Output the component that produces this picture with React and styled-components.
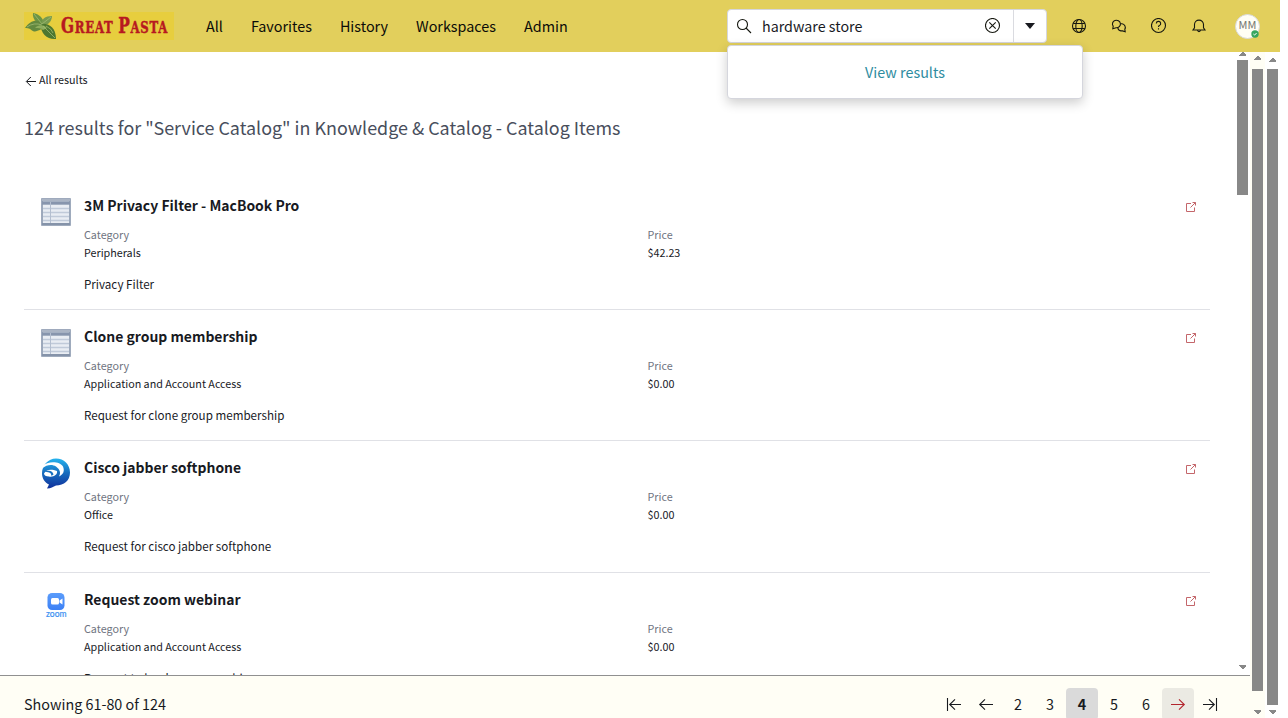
import React from "react";
import styled, { createGlobalStyle, css } from "styled-components";

const Global = createGlobalStyle`
  * { box-sizing: border-box; }
  body { margin: 0; background: #fff; overflow: hidden; }
  body, button, input { font-family: "Noto Sans CJK SC", "Noto Sans", sans-serif; color: #181a1f; }
  button { border: 0; background: none; padding: 0; }
  svg { display: block; flex: none; }
`;

const Page = styled.div`
  width: 1288px;
  height: 718px;
  padding-right: 8px;
  display: flex;
  flex-direction: column;
  overflow: hidden;
  background: #fff;
`;

const Header = styled.header`
  height: 52px;
  flex: none;
  display: flex;
  align-items: center;
  padding: 0 20px 0 24px;
  background: #e2cf5c;
`;

const Nav = styled.nav`
  display: flex;
  flex: 1;
  gap: 28px;
  margin-left: 32px;
`;

const NavItem = styled.a`
  font-size: 14.37px;
  line-height: 24px;
  color: #0b0b08;
  white-space: nowrap;
`;

const SearchWrap = styled.div`
  position: relative;
  width: 320px;
  height: 34px;
`;

const SearchBox = styled.div`
  display: flex;
  align-items: center;
  width: 100%;
  height: 100%;
  padding-left: 8px;
  background: #fff;
  border: 1px solid #d5d6dd;
  border-radius: 4px;
`;

const Query = styled.span`
  flex: 1;
  margin-left: 10px;
  font-size: 14.3px;
  line-height: 24px;
`;

const ScopeButton = styled.button`
  display: flex;
  align-items: center;
  justify-content: center;
  width: 33px;
  height: 32px;
  margin-left: 12px;
  border-left: 1px solid #dadbe0;
`;

const Suggestions = styled.div`
  position: absolute;
  z-index: 2;
  top: 36px;
  left: 0;
  width: 356px;
  height: 54px;
  display: flex;
  align-items: center;
  justify-content: center;
  background: #fff;
  border: 1px solid #d5d6dd;
  border-radius: 4px;
  box-shadow: 0 4px 12px rgba(0, 0, 0, 0.2);
  color: #2e8ca0;
  font-size: 14.37px;
  line-height: 24px;
`;

const Tools = styled.div`
  display: flex;
  align-items: center;
  gap: 24px;
  margin-left: 24px;
`;

const Avatar = styled.div`
  position: relative;
  display: flex;
  align-items: center;
  justify-content: center;
  width: 25px;
  height: 25px;
  margin-left: 28px;
  border: 1px solid #d9d9d9;
  border-radius: 50%;
  background: #fffef5;
  color: #74766f;
  font-size: 11px;
  line-height: 16px;
  padding-bottom: 4px;
`;

const Presence = styled.svg`
  position: absolute;
  right: 0;
  bottom: 0;
`;

const Body = styled.div`
  flex: 1;
  min-height: 0;
  display: flex;
`;

const Main = styled.main`
  width: 1250px;
  display: flex;
  flex-direction: column;
`;

const ScrollRegion = styled.div`
  height: 623px;
  flex: none;
  display: flex;
  overflow: hidden;
`;

const Results = styled.div`
  flex: 1;
  padding: 17px 25px 0 24px;
  overflow: hidden;
`;

const BackLink = styled.a`
  display: flex;
  align-items: center;
  gap: 2px;
  height: 20px;
  font-size: 10.75px;

  svg { margin-top: 2px; }
`;

const Heading = styled.h1`
  margin: 23px 0 37px;
  height: 30px;
  font-size: 17.92px;
  line-height: 30px;
  font-weight: 400;
  color: #484e5c;
`;

const Row = styled.article`
  display: flex;
  height: ${(p) => p.$h}px;
  padding: 13px 13px 0 16px;
  border-bottom: 1px solid #e0e1e6;
`;

const Thumb = styled.div`
  width: 32px;
  height: 32px;
  margin-top: 4px;
  margin-right: 12px;
`;

const Details = styled.div`
  flex: 1;
`;

const Title = styled.h2`
  margin: 0;
  height: 26px;
  font-size: 13.95px;
  line-height: 26px;
  font-weight: 700;
`;

const Fields = styled.dl`
  display: grid;
  grid-template-columns: 563.5px 1fr;
  grid-template-rows: 18px 18px;
  grid-auto-flow: column;
  margin: 8px 0 0;
  font-size: 10.75px;
  line-height: 18px;
`;

const Label = styled.dt`
  color: #6f7481;
`;

const Value = styled.dd`
  margin: 0;
`;

const Summary = styled.p`
  margin: 12px 0 0;
  font-size: 11.62px;
  line-height: 20px;
`;

const OpenIcon = styled.svg`
  margin-top: 9px;
`;

const Footer = styled.footer`
  flex: 1;
  display: flex;
  align-items: flex-start;
  justify-content: space-between;
  padding: 12px 24px 0;
  border-top: 1px solid #909090;
  background: #fffef5;
`;

const Count = styled.span`
  font-size: 14.37px;
  line-height: 32px;
`;

const Pager = styled.div`
  display: flex;
`;

const PageButton = styled.button`
  width: 32px;
  height: 32px;
  display: flex;
  align-items: center;
  justify-content: center;
  border-radius: 4px;
  font-size: 14.37px;
  line-height: 32px;
  ${(p) => p.$current && css`background: #dadada; font-weight: 700;`}
  ${(p) => p.$hover && css`background: #ebeae3;`}
`;

const Track = styled.div`
  width: 15px;
  flex: none;
  display: flex;
  flex-direction: column;
  align-items: center;
  overflow: hidden;
  padding: ${(p) => p.$pad};
  background: ${(p) => p.$bg || "#fff"};
`;

const ScrollThumb = styled.div`
  width: 11px;
  height: ${(p) => p.$h}px;
  margin: ${(p) => p.$gap};
  flex: none;
  background: #888;
`;

function ScrollArrow({ down }) {
  return (
    <svg width="7" height="4" shapeRendering="crispEdges">
      <path d={down ? "M0 0H7V1L4 4H3L0 1Z" : "M0 4V3L3 0H4L7 3V4Z"} fill="#888" />
    </svg>
  );
}

const line = { fill: "none", stroke: "#15170f", strokeWidth: 1.1 };

const LogoFrame = styled.div`
  width: 150px;
  height: 28px;
  flex: none;
  background: #e7ce3e;
`;

function Logo() {
  return (
    <LogoFrame>
      <svg width="150" height="28">
        <path d="M20 13C13 12 8 7 9 1C15 2 20 6 20 13Z" fill="#6b9445" />
        <path d="M19 13C15 6 6 8 1 16C7 15 8 21 13 19C16 18 19 17 19 13Z" fill="#63893f" />
        <path d="M18 13C17 7 21 4 28 4C28 9 24 14 18 13Z" fill="#789b50" />
        <path d="M17 12C24 11 32 15 32 27C24 28 16 22 17 12Z" fill="#4c7730" />
        <path d="M11 16C14 13 19 12 23 16L19 18C17 16 14 16 11 16Z" fill="#8fae5e" />
        <path d="M3 15Q10 10 18 13M10 2L18 12L27 5M19 14L31 26M22 14Q28 17 29 21" fill="none" stroke="#9fba72" strokeWidth=".8" />
        <text
          x="37"
          y="21.3"
          fill="#b71920"
          stroke="#b71920"
          strokeWidth=".5"
          fontFamily="'DejaVu Serif Condensed', 'DejaVu Serif', serif"
          fontWeight="700"
          fontSize="23"
          letterSpacing="1"
          textLength="107"
          lengthAdjust="spacingAndGlyphs"
        >
          G<tspan fontSize="17.5">REAT </tspan>P<tspan fontSize="17.5">ASTA</tspan>
        </text>
      </svg>
    </LogoFrame>
  );
}

function TableIcon() {
  return (
    <svg width="32" height="32">
      <rect x="2" y="3" width="28" height="26" fill="#e9edf3" stroke="#8896ad" strokeWidth="1.6" />
      <path d="M2 4H30" stroke="#aab4c4" strokeWidth="2" />
      <path d="M2 7H30" stroke="#8795ad" strokeWidth="3.4" />
      <path d="M3 12.5H29M3 16.5H29M3 20.5H29M3 24.5H29" stroke="#c0cad9" strokeWidth="1.3" />
      <path d="M10.5 6V28" stroke="#b4bfd0" />
      <path d="M2 28H30" stroke="#8593a9" strokeWidth="2" />
    </svg>
  );
}

function JabberIcon() {
  return (
    <svg width="32" height="32">
      <defs>
        <linearGradient id="jabber" x1="0" y1="0" x2="0" y2="1">
          <stop offset="0" stopColor="#25b3ee" />
          <stop offset=".45" stopColor="#1870c0" />
          <stop offset="1" stopColor="#10309b" />
        </linearGradient>
      </defs>
      <g transform="translate(0 -.5)">
        <path d="M16 1C24 1 30 7 30 15C30 23 24 28 16 28C13 29 11 31 7 31L9 27C5 25 2 21 2 16C2 8 8 1 16 1Z" fill="url(#jabber)" />
        <path d="M2 9C8 3 20 4 23 9C25 14 23 17 19 19C21 15 20 12 16 9C12 6.5 7 7 2 11Z" fill="#fff" />
        <path d="M4 16C6 12 11 11 17 13.5C18 17 13 20 9 19C6 19 4 18 4 16Z" fill="#fff" />
        <path d="M4.5 14.5C9 12 13 14 13.5 17C13 17.8 12 18 11 18C12 15.5 9 14.3 4.5 14.5Z" fill="#1870c0" />
      </g>
    </svg>
  );
}

function ZoomIcon() {
  return (
    <svg width="32" height="32">
      <defs>
        <linearGradient id="zoom" x1="0" y1="0" x2="0" y2="1">
          <stop offset="0" stopColor="#5a9cfb" />
          <stop offset="1" stopColor="#3c80f5" />
        </linearGradient>
      </defs>
      <rect x="7.5" y="3" width="17" height="17" rx="4.5" fill="url(#zoom)" />
      <rect x="11" y="8" width="8" height="6.5" rx="1.5" fill="#fff" />
      <path d="M19.5 10.5L22.5 8.5V14.5L19.5 12.5Z" fill="#fff" />
      <text x="6" y="26.6" fontSize="9" fontFamily="Lato, sans-serif" fill="#3d91f2" stroke="#3d91f2" strokeWidth=".2" textLength="20.5" lengthAdjust="spacingAndGlyphs">zoom</text>
    </svg>
  );
}

function Arrow({ right, bar, color = "#181a1f" }) {
  return (
    <svg width="16" height="16" fill="none" stroke={color} strokeWidth="1.1">
      <g transform={right ? "matrix(-1 0 0 1 16 0)" : undefined}>
        {bar && <path d="M1.5 2V15" />}
        <path d={bar ? "M15 8.5H4M9 3.3L3.7 8.5L9 13.7" : "M15 8.5H2M7 3.3L1.7 8.5L7 13.7"} />
      </g>
    </svg>
  );
}

const items = [
  { icon: TableIcon, height: 131, title: "3M Privacy Filter - MacBook Pro", category: "Peripherals", price: "$42.23", text: "Privacy Filter" },
  { icon: TableIcon, height: 131, title: "Clone group membership", category: "Application and Account Access", price: "$0.00", text: "Request for clone group membership" },
  { icon: JabberIcon, height: 132, title: "Cisco jabber softphone", category: "Office", price: "$0.00", text: "Request for cisco jabber softphone" },
  { icon: ZoomIcon, height: 131, title: "Request zoom webinar", category: "Application and Account Access", price: "$0.00", text: "Request to book a zoom webinar" },
];

export default function App() {
  return (
    <>
      <Global />
      <Page>
        <Header>
          <Logo />
          <Nav>
            {["All", "Favorites", "History", "Workspaces", "Admin"].map((n) => (
              <NavItem key={n}>{n}</NavItem>
            ))}
          </Nav>
          <SearchWrap>
            <SearchBox>
              <svg width="16" height="16" {...line}>
                <circle cx="6.5" cy="6.5" r="5" />
                <path d="M10 10L15 15" />
              </svg>
              <Query>hardware store</Query>
              <svg width="16" height="16" {...line}>
                <circle cx="7.5" cy="7.5" r="7" />
                <path d="M4.3 4.3L10.7 10.7M10.7 4.3L4.3 10.7" />
              </svg>
              <ScopeButton>
                <svg width="10" height="6"><path d="M0 0H10L5 6Z" fill="#181a1f" /></svg>
              </ScopeButton>
            </SearchBox>
            <Suggestions>View results</Suggestions>
          </SearchWrap>
          <Tools>
            <svg width="16" height="16" {...line}>
              <circle cx="8" cy="8" r="6.5" />
              <ellipse cx="8" cy="8" rx="3.2" ry="6.5" />
              <path d="M2.2 5.5H13.8M2.2 10.5H13.8" />
            </svg>
            <svg width="16" height="16" {...line}>
              <path d="M1.8 10.8L2.2 8.2A4 3.7 0 1 1 5 9.7Z" />
              <path d="M9.8 5.8H11A3.6 3.6 0 0 1 13.8 11.2L14.2 13.8L11.5 12.9H9.8A3.6 3.6 0 0 1 6.8 9.8" />
            </svg>
            <svg width="16" height="16" {...line}>
              <circle cx="7.5" cy="7.5" r="7" />
              <path d="M5.3 5.6A2.2 2.2 0 1 1 8.3 7.6Q7.5 8 7.5 9.1M7.5 10.3V11.5" />
            </svg>
            <svg width="16" height="16" {...line}>
              <path d="M2 12H14L12.5 9.8V6.6A4.5 4.5 0 0 0 3.5 6.6V9.8ZM6.5 12.5Q8 14.8 9.5 12.5" />
            </svg>
          </Tools>
          <Avatar>
            MM
            <Presence width="8" height="8">
              <circle cx="4" cy="4" r="3.7" fill="#37a660" />
              <path d="M2.4 4L3.6 5.1L5.6 3" fill="none" stroke="#fff" />
            </Presence>
          </Avatar>
        </Header>
        <Body>
          <Main>
            <ScrollRegion>
              <Results>
                <BackLink>
                  <svg width="13" height="13" fill="none" stroke="#181a1f">
                    <path d="M12 7.5H2.8M6.8 3L2.3 7.5L6.8 12" />
                  </svg>
                  All results
                </BackLink>
                <Heading>124 results for "Service Catalog" in Knowledge &amp; Catalog - Catalog Items</Heading>
                {items.map(({ icon: Icon, ...it }) => (
                  <Row key={it.title} $h={it.height}>
                    <Thumb><Icon /></Thumb>
                    <Details>
                      <Title>{it.title}</Title>
                      <Fields>
                        <Label>Category</Label>
                        <Value>{it.category}</Value>
                        <Label>Price</Label>
                        <Value>{it.price}</Value>
                      </Fields>
                      <Summary>{it.text}</Summary>
                    </Details>
                    <OpenIcon width="12" height="12" fill="none" stroke="#c4666b">
                      <path d="M6 2.5H1.5V10.5H9.5V6.5M5.5 6.5L10.5 1.5M7.5 1.5H10.5V4.5" />
                    </OpenIcon>
                  </Row>
                ))}
              </Results>
              <Track $pad="0">
                <ScrollArrow />
                <ScrollThumb $h={135} $gap="4px 0 470px" />
                <ScrollArrow down />
              </Track>
            </ScrollRegion>
            <Footer>
              <Count>Showing 61-80 of 124</Count>
              <Pager>
                <PageButton><Arrow bar /></PageButton>
                <PageButton><Arrow /></PageButton>
                <PageButton>2</PageButton>
                <PageButton>3</PageButton>
                <PageButton $current>4</PageButton>
                <PageButton>5</PageButton>
                <PageButton>6</PageButton>
                <PageButton $hover><Arrow right color="#b3262e" /></PageButton>
                <PageButton><Arrow right bar /></PageButton>
              </Pager>
            </Footer>
          </Main>
          <Track $pad="4px 0 0" $bg="#fffef5">
            <ScrollArrow />
            <ScrollThumb $h={622} $gap="9px 0 19px" />
            <ScrollArrow down />
          </Track>
          <Track $pad="6px 0 0">
            <ScrollArrow />
            <ScrollThumb $h={636} $gap="7px 0 5px" />
            <ScrollArrow down />
          </Track>
        </Body>
      </Page>
    </>
  );
}
